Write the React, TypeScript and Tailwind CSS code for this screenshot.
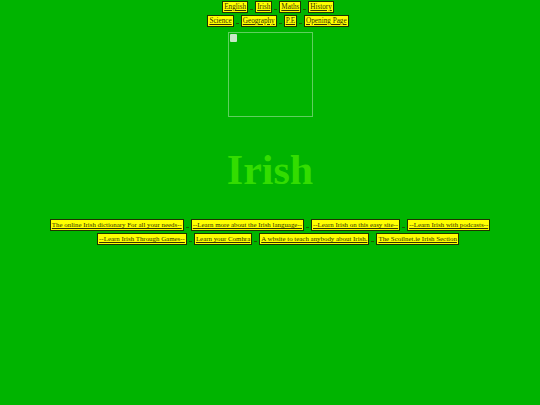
import React from "react";

const Btn = ({ children, size }: { children: React.ReactNode; size: string }) => (
  <span className={"inline-block whitespace-nowrap border border-[#1f3300] bg-[#ffff00] px-[1px] leading-[10px] text-[#333300] underline " + size}>
    {children}
  </span>
);

const Sep = () => <span className="mx-[2px] mb-[3px] h-px w-[3px] self-end bg-[#1f5a00]" />;

const Row = ({ items, className = "", size = "text-[6.9px]" }: { items: string[]; className?: string; size?: string }) => (
  <div className={"flex justify-center " + className}>
    {items.map((t, i) => (
      <React.Fragment key={t}>
        {i > 0 && <Sep />}
        <Btn size={size}>{t}</Btn>
      </React.Fragment>
    ))}
  </div>
);

export default function App() {
  return (
    <div className="min-h-[405px] w-[540px] bg-[#00b400] pt-px font-['Liberation_Serif',serif]">
      <Row items={["English", "Irish", "Maths", "History"]} className="pl-[16px]" size="text-[7.2px]" />
      <Row items={["Science", "Geography", "P.E", "Opening Page"]} className="mt-[2px] pl-[16px]" size="text-[7.2px]" />
      <div className="mt-[5px] flex justify-center">
        <div className="relative h-[85px] w-[85px] border border-[#5fcf5f]">
          <div className="absolute left-[1px] top-[1px] h-[8px] w-[7px] rounded-[1px] bg-[#c8e8c8]" />
        </div>
      </div>
      <div className="mt-[29px] text-center text-[42px] font-bold leading-[48px] text-[#33dd00]">Irish</div>
      <div className="mt-[25px]">
        <Row
          items={[
            "The online Irish dictionary For all your needs--",
            "--Learn more about the Irish language--",
            "--Learn Irish on this easy site--",
            "--Learn Irish with podcasts--",
          ]}
        />
        <Row
          items={[
            "--Learn Irish Through Games--",
            "Learn your Comhra",
            "A wbsite to teach anybody about Irish.",
            "The Scoilnet.ie Irish Section",
          ]}
          className="mt-[2px] pl-[16px]"
        />
      </div>
    </div>
  );
}
